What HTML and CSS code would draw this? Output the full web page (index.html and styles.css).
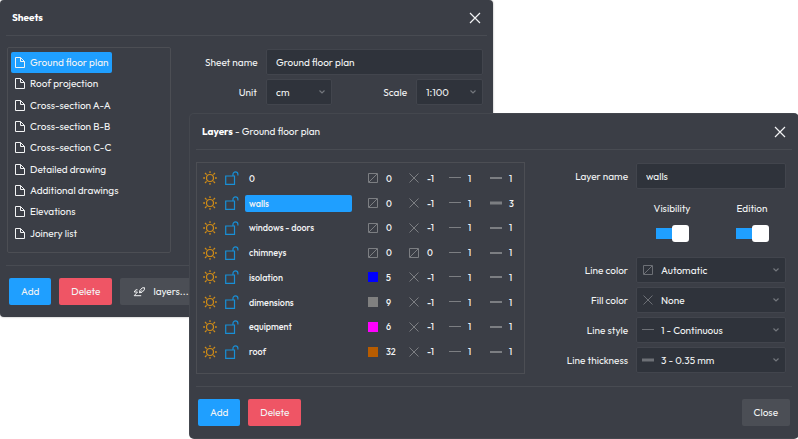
FILE: index.html
```html
<!DOCTYPE html>
<html lang="en">
<head>
	<meta charset="utf-8">
	<title>Sheets</title>
	<link rel="stylesheet" href="styles.css">
</head>

<body>

<!-- icons -->
<svg class="sprite">
	<symbol id="i-page" viewBox="0 0 10 11"><path d="M.5.5h5l4 4v6h-9zM5.5.5v4h4"/></symbol>
	<symbol id="i-close" viewBox="0 0 12 12"><path d="M1 1l10 10M11 1L1 11" stroke-width="1.200"/></symbol>
	<symbol id="i-arrow" viewBox="0 0 8 6"><path d="M1.500 1.500L4 4l2.500-2.500" stroke-width="1.200"/></symbol>
	<symbol id="i-sun" viewBox="0 0 14 14"><circle cx="7" cy="7" r="3.500" stroke-width="1.200"/><path d="M7 .2v1.800M7 12v1.800M.2 7h1.800M12 7h1.800M2 2l1.600 1.600M10.400 10.400L12 12M2 12l1.600-1.600M10.400 3.600L12 2" stroke-width="1.300"/></symbol>
	<symbol id="i-lock" viewBox="0 0 14 14"><path d="M.7 5h8.800v8.300H.7zM8 5V3.300a2.400 2.400 0 0 1 4.900 0V4.500" stroke-width="1.200"/></symbol>
	<symbol id="i-auto" viewBox="0 0 14 14"><path d="M2.500 2.500h9v9h-9zM3 11l8-8"/></symbol>
	<symbol id="i-none" viewBox="0 0 14 14"><path d="M2.500 2.500l9 9M11.500 2.500l-9 9"/></symbol>
	<symbol id="i-line" viewBox="0 0 14 14"><path d="M1 6.500h12"/></symbol>
	<symbol id="i-thin" viewBox="0 0 14 14"><path d="M1 7h12" stroke-width="2"/></symbol>
	<symbol id="i-thick" viewBox="0 0 14 14"><path d="M1 7h12" stroke-width="3"/></symbol>
	<symbol id="i-layers" viewBox="0 0 14 12"><path d="M5.500 3.800H3.800L2.200 6h3.300L2.200 9.700h7M7.500 6.800l.3-2.300 2.400-2.600 2.300-.2-.2 2.200L10 6.300zM7.500 6.800l2.500-2.500"/></symbol>
</svg>

<section class="window sheets">
	<header class="window-head">
		<h1>Sheets</h1>
		<button class="close" type="button" aria-label="Close"><svg><use href="#i-close"/></svg></button>
	</header>

	<div class="sheets-body">
		<ul class="sheet-list">
			<li><a class="active" href="#"><svg><use href="#i-page"/></svg>Ground floor plan</a></li>
			<li><a href="#"><svg><use href="#i-page"/></svg>Roof projection</a></li>
			<li><a href="#"><svg><use href="#i-page"/></svg>Cross-section A-A</a></li>
			<li><a href="#"><svg><use href="#i-page"/></svg>Cross-section B-B</a></li>
			<li><a href="#"><svg><use href="#i-page"/></svg>Cross-section C-C</a></li>
			<li><a href="#"><svg><use href="#i-page"/></svg>Detailed drawing</a></li>
			<li><a href="#"><svg><use href="#i-page"/></svg>Additional drawings</a></li>
			<li><a href="#"><svg><use href="#i-page"/></svg>Elevations</a></li>
			<li><a href="#"><svg><use href="#i-page"/></svg>Joinery list</a></li>
		</ul>

		<form class="sheet-form">
			<label for="sheet-name">Sheet name</label>
			<input class="field wide" type="text" id="sheet-name" value="Ground floor plan">
			<label for="unit">Unit</label>
			<div class="select"><select class="field" id="unit"><option>cm</option><option>mm</option><option>m</option></select><svg class="arrow"><use href="#i-arrow"/></svg></div>
			<label for="scale">Scale</label>
			<div class="select"><select class="field" id="scale"><option>1:100</option><option>1:50</option></select><svg class="arrow"><use href="#i-arrow"/></svg></div>
		</form>
	</div>

	<footer class="window-foot">
		<button class="btn add" type="button">Add</button>
		<button class="btn delete" type="button">Delete</button>
		<button class="btn" type="button"><svg><use href="#i-layers"/></svg>layers...</button>
	</footer>
</section>

<section class="window layers">
	<header class="window-head">
		<h2><b>Layers</b> - Ground floor plan</h2>
		<button class="close" type="button" aria-label="Close"><svg><use href="#i-close"/></svg></button>
	</header>

	<div class="layers-body">
		<div class="layer-list">
			<table>
				<colgroup><col class="c-sun"><col class="c-lock"><col><col class="c-prop"><col class="c-prop"><col class="c-prop"><col class="c-last"></colgroup>
				<tr>
					<td><svg class="sun"><use href="#i-sun"/></svg></td>
					<td><svg class="lock"><use href="#i-lock"/></svg></td>
					<td><span class="name">0</span></td>
					<td><span class="prop"><svg><use href="#i-auto"/></svg>0</span></td>
					<td><span class="prop"><svg><use href="#i-none"/></svg>-1</span></td>
					<td><span class="prop"><svg><use href="#i-line"/></svg>1</span></td>
					<td><span class="prop"><svg><use href="#i-thin"/></svg>1</span></td>
				</tr>
				<tr>
					<td><svg class="sun"><use href="#i-sun"/></svg></td>
					<td><svg class="lock"><use href="#i-lock"/></svg></td>
					<td><span class="name active">walls</span></td>
					<td><span class="prop"><svg><use href="#i-auto"/></svg>0</span></td>
					<td><span class="prop"><svg><use href="#i-none"/></svg>-1</span></td>
					<td><span class="prop"><svg><use href="#i-line"/></svg>1</span></td>
					<td><span class="prop"><svg><use href="#i-thick"/></svg>3</span></td>
				</tr>
				<tr>
					<td><svg class="sun"><use href="#i-sun"/></svg></td>
					<td><svg class="lock"><use href="#i-lock"/></svg></td>
					<td><span class="name">windows - doors</span></td>
					<td><span class="prop"><svg><use href="#i-auto"/></svg>0</span></td>
					<td><span class="prop"><svg><use href="#i-none"/></svg>-1</span></td>
					<td><span class="prop"><svg><use href="#i-line"/></svg>1</span></td>
					<td><span class="prop"><svg><use href="#i-thin"/></svg>1</span></td>
				</tr>
				<tr>
					<td><svg class="sun"><use href="#i-sun"/></svg></td>
					<td><svg class="lock"><use href="#i-lock"/></svg></td>
					<td><span class="name">chimneys</span></td>
					<td><span class="prop"><svg><use href="#i-auto"/></svg>0</span></td>
					<td><span class="prop"><svg><use href="#i-auto"/></svg>0</span></td>
					<td><span class="prop"><svg><use href="#i-line"/></svg>1</span></td>
					<td><span class="prop"><svg><use href="#i-thin"/></svg>1</span></td>
				</tr>
				<tr>
					<td><svg class="sun"><use href="#i-sun"/></svg></td>
					<td><svg class="lock"><use href="#i-lock"/></svg></td>
					<td><span class="name">isolation</span></td>
					<td><span class="prop"><i class="swatch blue"></i>5</span></td>
					<td><span class="prop"><svg><use href="#i-none"/></svg>-1</span></td>
					<td><span class="prop"><svg><use href="#i-line"/></svg>1</span></td>
					<td><span class="prop"><svg><use href="#i-thin"/></svg>1</span></td>
				</tr>
				<tr>
					<td><svg class="sun"><use href="#i-sun"/></svg></td>
					<td><svg class="lock"><use href="#i-lock"/></svg></td>
					<td><span class="name">dimensions</span></td>
					<td><span class="prop"><i class="swatch gray"></i>9</span></td>
					<td><span class="prop"><svg><use href="#i-none"/></svg>-1</span></td>
					<td><span class="prop"><svg><use href="#i-line"/></svg>1</span></td>
					<td><span class="prop"><svg><use href="#i-thin"/></svg>1</span></td>
				</tr>
				<tr>
					<td><svg class="sun"><use href="#i-sun"/></svg></td>
					<td><svg class="lock"><use href="#i-lock"/></svg></td>
					<td><span class="name">equipment</span></td>
					<td><span class="prop"><i class="swatch magenta"></i>6</span></td>
					<td><span class="prop"><svg><use href="#i-none"/></svg>-1</span></td>
					<td><span class="prop"><svg><use href="#i-line"/></svg>1</span></td>
					<td><span class="prop"><svg><use href="#i-thin"/></svg>1</span></td>
				</tr>
				<tr>
					<td><svg class="sun"><use href="#i-sun"/></svg></td>
					<td><svg class="lock"><use href="#i-lock"/></svg></td>
					<td><span class="name">roof</span></td>
					<td><span class="prop"><i class="swatch orange"></i>32</span></td>
					<td><span class="prop"><svg><use href="#i-none"/></svg>-1</span></td>
					<td><span class="prop"><svg><use href="#i-line"/></svg>1</span></td>
					<td><span class="prop"><svg><use href="#i-thin"/></svg>1</span></td>
				</tr>
			</table>
		</div>

		<form class="layer-form">
			<label for="layer-name">Layer name</label>
			<input class="field" type="text" id="layer-name" value="walls">
			<div class="toggles">
				<label>Visibility<input class="toggle" type="checkbox" checked></label>
				<label>Edition<input class="toggle" type="checkbox" checked></label>
			</div>
			<label for="line-color">Line color</label>
			<div class="select"><svg class="mark"><use href="#i-auto"/></svg><select class="field with-mark" id="line-color"><option>Automatic</option></select><svg class="arrow"><use href="#i-arrow"/></svg></div>
			<label for="fill-color">Fill color</label>
			<div class="select"><svg class="mark"><use href="#i-none"/></svg><select class="field with-mark" id="fill-color"><option>None</option></select><svg class="arrow"><use href="#i-arrow"/></svg></div>
			<label for="line-style">Line style</label>
			<div class="select"><svg class="mark"><use href="#i-line"/></svg><select class="field with-mark" id="line-style"><option>1 - Continuous</option></select><svg class="arrow"><use href="#i-arrow"/></svg></div>
			<label for="line-thickness">Line thickness</label>
			<div class="select"><svg class="mark"><use href="#i-thick"/></svg><select class="field with-mark" id="line-thickness"><option>3 - 0.35 mm</option></select><svg class="arrow"><use href="#i-arrow"/></svg></div>
		</form>
	</div>

	<footer class="window-foot">
		<button class="btn add" type="button">Add</button>
		<button class="btn delete" type="button">Delete</button>
		<button class="btn right" type="button">Close</button>
	</footer>
</section>

</body>
</html>
```
FILE: styles.css
```css
*{box-sizing:border-box;}
body{margin:0;background:#fff;color:#f2f3f4;font:400 10px/17px "Outfit", Lato, "Liberation Sans", sans-serif;}
svg{display:block;flex:none;fill:none;stroke:currentColor;}
.sprite{position:absolute;width:0;height:0;}
ul{list-style:none;margin:0;padding:0;}
a{color:inherit;text-decoration:none;}
label{white-space:nowrap;}
input, select, button{font:inherit;color:inherit;margin:0;}

/* windows */
.window{position:absolute;background:#3b3e46;border-radius:4px;}
.sheets{top:0;left:0;width:calc(100% - 305px);box-shadow:0 0 2px rgba(0,0,0,.4);}
.layers{top:114px;left:190px;right:0;box-shadow:0 0 0 1px #44474e;}

.window-head{display:flex;align-items:center;justify-content:space-between;height:36px;margin:0 6px;padding:0 6px;border-bottom:1px solid #484b52;}
.window-head h1, .window-head h2{margin:0;font-size:10px;font-weight:400;}
.window-head h1, .window-head b{font-weight:700;color:#fff;}
.close{padding:0;border:0;background:none;cursor:pointer;}
.close svg{width:12px;height:12px;}

.window-foot{display:flex;gap:8px;margin:0 6px;padding:12px 2px;border-top:1px solid #484b52;}
.sheets .window-foot{padding:12px 3px;}
.btn{display:flex;align-items:center;gap:7px;height:27px;padding:0 12px;border:0;border-radius:2px;background:#4b4e55;cursor:pointer;}
.btn svg{width:14px;height:12px;}
.btn.add{background:#1f9fff;}
.btn.delete{background:#ef5565;}
.btn.right{margin-left:auto;}

/* fields */
.field{width:100%;height:26px;padding:0 9px;border:1px solid #42454d;border-radius:2px;background:#2f333b;outline:none;appearance:none;}
.select{position:relative;}
.select svg{position:absolute;pointer-events:none;}
.select .arrow{top:10px;right:6px;width:8px;height:6px;color:#73767c;}
.select .mark{top:6px;left:5px;width:14px;height:14px;color:#6d7076;}
.field.with-mark{padding-left:24px;}

/* sheets */
.sheets-body{display:grid;grid-template-columns:164px 1fr;gap:34px;padding:11px 10px 12px 7px;}
.sheet-list{display:grid;grid-auto-rows:1fr;min-height:206px;padding:4px 3px 8px;border:1px solid #4c4e54;border-radius:2px;}
.sheet-list li{display:flex;}
.sheet-list a{display:flex;align-items:center;gap:5px;padding:0 4px;border-radius:2px;}
.sheet-list svg{width:10px;height:11px;}
.sheet-list a.active{background:#1f9fff;}
.sheet-form{display:grid;grid-template-columns:52px 66px 1fr 67px;gap:4px 9px;align-items:center;align-content:start;padding-top:2px;text-align:right;}
.sheet-form .wide{grid-column:span 3;}

/* layers */
.layers-body{display:grid;grid-template-columns:1fr 245px;gap:16px;padding:12px 12px 12px 6px;}
.layer-list{padding:3px 0 9px 6px;border:1px solid #4c4e54;}
.layer-list table{width:100%;height:198px;border-collapse:collapse;table-layout:fixed;font-size:9px;font-weight:500;}
.layer-list td{padding:0;}
.c-sun{width:22px;}
.c-lock{width:20px;}
.c-prop{width:41px;}
.c-last{width:35px;}
.sun, .lock{width:14px;height:14px;}
.sun{color:#d08c17;}
.lock{color:#188fd6;}
.name{display:block;margin-right:14px;padding:0 4px;border-radius:2px;}
.name.active{background:#1f9fff;}
.prop{display:flex;align-items:center;gap:6px;}
.prop svg{width:14px;height:14px;color:#7c7e82;}
.swatch{width:10px;height:10px;margin:0 2px;}
.blue{background:#00f;}
.gray{background:#808080;}
.magenta{background:#f0f;}
.orange{background:#b85c00;}

.layer-form{display:grid;grid-template-columns:1fr 150px;gap:4px 8px;align-items:center;align-content:start;padding-top:1px;text-align:right;}
.toggles{grid-column:2;display:flex;justify-content:space-between;padding:7px 9px 11px 11px;}
.toggles label{display:flex;flex-direction:column;align-items:center;gap:8px;width:50px;}
.toggle{display:flex;align-items:center;justify-content:flex-end;width:33px;height:17px;appearance:none;background:linear-gradient(#1f9fff, #1f9fff) center / 100% 11px no-repeat;border-radius:2px;cursor:pointer;}
.toggle:before{content:"";width:17px;height:17px;border-radius:3px;background:#fff;}
.toggle:not(:checked){justify-content:flex-start;background-image:linear-gradient(#5a5d64, #5a5d64);}
```
